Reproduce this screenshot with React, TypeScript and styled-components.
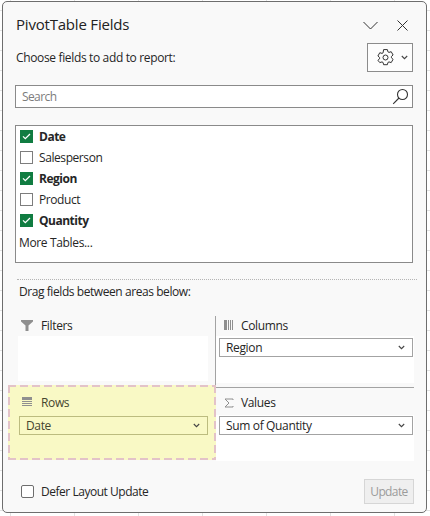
import React from 'react';
import styled, { createGlobalStyle } from 'styled-components';

const Global = createGlobalStyle`
  html, body { margin: 0; padding: 0; }
  body {
    width: 430px; height: 516px; overflow: hidden;
    font-family: "Open Sans", "Noto Sans", sans-serif;
    background-color: #fff;
    background-image:
      repeating-linear-gradient(to right, transparent 0 10px, #e2e2e2 10px 11px, transparent 11px 64px),
      repeating-linear-gradient(to bottom, transparent 0 10px, #e2e2e2 10px 11px, transparent 11px 20px);
  }
`;

const Panel = styled.div`
  box-sizing: border-box;
  margin: 1px 0 0 2px;
  width: 425px;
  height: 512px;
  border: 1px solid #6e6e6e;
  border-radius: 5px;
  background: #f9f9f9;
  padding: 12px 13px 0 12px;
  display: flex;
  flex-direction: column;
  color: #262626;
  font-size: 12px;
  letter-spacing: -0.35px;
`;

const Header = styled.div`
  display: flex;
  align-items: center;
  justify-content: space-between;
  height: 22px;
`;

const Title = styled.h1`
  margin: -2px 0 0 1px;
  font-size: 15px;
  font-weight: 400;
  letter-spacing: -0.2px;
  color: #222;
  line-height: 22px;
`;

const WindowButtons = styled.div`
  display: flex;
  align-items: center;
  gap: 19px;
  margin-right: 5px;
`;

const ChooseRow = styled.div`
  display: flex;
  align-items: center;
  justify-content: space-between;
  margin-top: 7px;
  height: 29px;
`;

const Label = styled.span`
  margin-left: 1px;
  line-height: 16px;
`;

const GearButton = styled.div`
  box-sizing: border-box;
  width: 46px;
  height: 29px;
  border: 1px solid #8c8c8c;
  background: #fdfdfd;
  display: flex;
  align-items: center;
  padding-left: 9px;
  gap: 7px;
`;

const SearchBox = styled.div`
  box-sizing: border-box;
  margin-top: 13px;
  height: 23px;
  border: 1px solid #8a8a8a;
  background: #fff;
  display: flex;
  align-items: center;
  justify-content: space-between;
  padding: 0 3px 0 6px;
  color: #7c7c7c;
  letter-spacing: -0.6px;
`;

const FieldList = styled.div`
  box-sizing: border-box;
  margin-top: 17px;
  height: 138px;
  border: 1px solid #8a8a8a;
  background: #fff;
  padding: 0 0 0 4px;
`;

const FieldRow = styled.div`
  height: 21px;
  display: flex;
  align-items: center;
  gap: 6px;
`;

const FieldName = styled.span<{ $on?: boolean }>`
  font-weight: ${p => (p.$on ? 700 : 400)};
  letter-spacing: ${p => (p.$on ? '-0.5px' : '-0.42px')};
`;

const Box = styled.span<{ $on?: boolean }>`
  box-sizing: border-box;
  width: 13px;
  height: 13px;
  flex: none;
  border: 1px solid ${p => (p.$on ? '#107c41' : '#7d7d7d')};
  background: ${p => (p.$on ? '#107c41' : '#fff')};
  display: flex;
  align-items: center;
  justify-content: center;
`;

const MoreLink = styled.div`
  height: 21px;
  line-height: 23px;
  margin-left: -1px;
`;

const Dotted = styled.div`
  margin: 16px -4px 0 2px;
  border-top: 1px dotted #b4b4b4;
`;

const DragLabel = styled.div`
  margin: 4px 0 0 4px;
  height: 16px;
  line-height: 16px;
  letter-spacing: -0.43px;
`;

const AreaGrid = styled.div`
  margin: 16px -1px 0 -7px;
  display: grid;
  grid-template-columns: 208px 1fr;
  grid-template-rows: 69px 75px;
`;

const LeftArea = styled.div`
  padding: 0 8px 0 10px;
`;

const RowsArea = styled.div`
  box-sizing: border-box;
  padding: 8px 8px 0 11px;
  background-color: #f9f9c5;
  background-image:
    repeating-linear-gradient(to right, #e3c3c8 0 8px, transparent 8px 12px),
    repeating-linear-gradient(to right, #e3c3c8 0 8px, transparent 8px 12px),
    repeating-linear-gradient(to bottom, #e3c3c8 0 8px, transparent 8px 12px),
    repeating-linear-gradient(to bottom, #e3c3c8 0 8px, transparent 8px 12px);
  background-size: 100% 2px, 100% 2px, 2px 100%, 2px 100%;
  background-position: 0 0, 0 100%, 0 0, 100% 0;
  background-repeat: no-repeat;
`;

const ColumnsArea = styled.div`
  margin-left: -1px;
  margin-bottom: -2px;
  border-left: 1px solid #a3a3a3;
`;

const ValuesArea = styled.div`
  margin-top: 2px;
  border-top: 1px solid #a3a3a3;
`;

const AreaHead = styled.div<{ $indent: number; $gap: number }>`
  box-sizing: border-box;
  height: 20px;
  display: flex;
  align-items: center;
  padding: 0 0 2px ${p => p.$indent}px;
  gap: ${p => p.$gap}px;
`;

const AreaIcon = styled.span`
  width: 12px;
  height: 12px;
  display: flex;
  align-items: center;
  justify-content: center;
  flex: none;
`;

const FiltersDrop = styled.div`
  background: #fff;
  height: 45px;
`;

const ValuesHead = styled(AreaHead)`
  height: 27px;
  padding-top: 2px;
  padding-bottom: 0;
`;

const ValuesDrop = styled.div`
  background: #fff;
  height: 45px;
  padding: 1px 1px 0 3px;
`;

const ColumnsDrop = styled.div`
  background: #fff;
  height: 45px;
  padding: 2px 1px 0 3px;
`;

const Pill = styled.div<{ $tint?: boolean }>`
  box-sizing: border-box;
  height: 19px;
  border: 1px solid ${p => (p.$tint ? '#bcbc7f' : '#a3a3a3')};
  background: ${p => (p.$tint ? '#f9f9c5' : '#fff')};
  color: ${p => (p.$tint ? '#45452f' : '#262626')};
  display: flex;
  align-items: center;
  justify-content: space-between;
  padding: 0 7px 0 6px;
`;

const RowsHead = styled(AreaHead)`
  height: 23px;
  padding-bottom: 5px;
  color: #45452f;
`;

const Footer = styled.div`
  margin-top: 19px;
  display: flex;
  align-items: center;
  justify-content: space-between;
  height: 25px;
  padding-left: 6px;
`;

const Defer = styled.div`
  display: flex;
  align-items: center;
  gap: 7px;
  letter-spacing: -0.47px;
`;

const DeferBox = styled.span`
  box-sizing: border-box;
  width: 13px;
  height: 13px;
  border: 1px solid #6e6e6e;
  border-radius: 2px;
  background: #fff;
`;

const UpdateButton = styled.div`
  box-sizing: border-box;
  width: 50px;
  height: 25px;
  margin-right: -1px;
  border: 1px solid #d6d6d6;
  background: #efefef;
  color: #9b9b9b;
  letter-spacing: -0.6px;
  display: flex;
  align-items: center;
  justify-content: center;
`;

const Chevron = () => (
  <svg width="7" height="5" viewBox="0 0 7 5" fill="none" stroke="#444" strokeWidth="1.1">
    <path d="M.8 1 3.5 3.7 6.2 1" />
  </svg>
);

const Check = () => (
  <svg width="9" height="7" viewBox="0 0 9 7" fill="none" stroke="#fff" strokeWidth="1.3">
    <path d="M1 3.4 3.3 5.6 8 1" />
  </svg>
);

const Gear = () => (
  <svg width="17" height="17" viewBox="0 0 17 17" fill="none" stroke="#333" strokeWidth="1">
    <path d="M6.6 1.2h3.8l.5 2.2 1.1.6 2.2-.7 1.9 3.3-1.7 1.5v1.3l1.7 1.5-1.9 3.3-2.2-.7-1.1.6-.5 2.2H6.6l-.5-2.2-1.1-.6-2.2.7L.9 11.9l1.7-1.5V9.1L.9 7.6l1.9-3.3 2.2.7 1.1-.6z" transform="translate(0 -.6)" />
    <circle cx="8.5" cy="8.5" r="2.5" />
  </svg>
);

const fields = [
  { name: 'Date', on: true },
  { name: 'Salesperson', on: false },
  { name: 'Region', on: true },
  { name: 'Product', on: false },
  { name: 'Quantity', on: true },
];

export default function App() {
  return (
    <>
      <Global />
      <Panel>
        <Header>
          <Title>PivotTable Fields</Title>
          <WindowButtons>
            <svg width="15" height="9" viewBox="0 0 15 9" fill="none" stroke="#333" strokeWidth="1">
              <path d="M.5 1 7.5 8 14.5 1" />
            </svg>
            <svg width="11" height="11" viewBox="0 0 11 11" fill="none" stroke="#333" strokeWidth="1">
              <path d="M.5.5 10.5 10.5M10.5.5.5 10.5" />
            </svg>
          </WindowButtons>
        </Header>
        <ChooseRow>
          <Label>Choose fields to add to report:</Label>
          <GearButton>
            <Gear />
            <Chevron />
          </GearButton>
        </ChooseRow>
        <SearchBox>
          <span>Search</span>
          <svg width="17" height="17" viewBox="0 0 17 17" fill="none" stroke="#333" strokeWidth="1.1">
            <circle cx="10.5" cy="6.5" r="5" />
            <path d="M7 10 1.2 15.8" />
          </svg>
        </SearchBox>
        <FieldList>
          {fields.map(f => (
            <FieldRow key={f.name}>
              <Box $on={f.on}>{f.on && <Check />}</Box>
              <FieldName $on={f.on}>{f.name}</FieldName>
            </FieldRow>
          ))}
          <MoreLink>More Tables...</MoreLink>
        </FieldList>
        <Dotted />
        <DragLabel>Drag fields between areas below:</DragLabel>
        <AreaGrid>
          <LeftArea>
            <AreaHead $indent={3} $gap={8}>
              <AreaIcon>
                <svg width="12" height="11" viewBox="0 0 12 11" fill="#8f8f8f">
                  <path d="M0 0h12v1.5L7.5 5.5V11h-3V5.5L0 1.5z" />
                </svg>
              </AreaIcon>
              <span>Filters</span>
            </AreaHead>
            <FiltersDrop />
          </LeftArea>
          <ColumnsArea>
            <AreaHead $indent={7} $gap={6}>
              <AreaIcon>
                <svg width="10" height="10" viewBox="0 0 10 10" fill="#8f8f8f">
                  <path d="M0 0h3v10H0zM4 0h1v10H4zM6 0h1v10H6zM8 0h1v10H8z" />
                </svg>
              </AreaIcon>
              <span>Columns</span>
            </AreaHead>
            <ColumnsDrop>
              <Pill>
                <span>Region</span>
                <Chevron />
              </Pill>
            </ColumnsDrop>
          </ColumnsArea>
          <RowsArea>
            <RowsHead $indent={2} $gap={8}>
              <AreaIcon>
                <svg width="10" height="10" viewBox="0 0 10 10" fill="#8f8f8f">
                  <path d="M0 0h10v3H0zM0 4h10v1H0zM0 6h10v1H0zM0 8h10v1H0z" />
                </svg>
              </AreaIcon>
              <span>Rows</span>
            </RowsHead>
            <Pill $tint>
              <span>Date</span>
              <Chevron />
            </Pill>
          </RowsArea>
          <ValuesArea>
            <ValuesHead $indent={7} $gap={6}>
              <AreaIcon>
                <svg width="10" height="10" viewBox="0 0 10 10" fill="none" stroke="#8f8f8f" strokeWidth="1">
                  <path d="M9 2V1H1l4 4-4 4h8V8" />
                </svg>
              </AreaIcon>
              <span>Values</span>
            </ValuesHead>
            <ValuesDrop>
              <Pill>
                <span>Sum of Quantity</span>
                <Chevron />
              </Pill>
            </ValuesDrop>
          </ValuesArea>
        </AreaGrid>
        <Footer>
          <Defer>
            <DeferBox />
            <span>Defer Layout Update</span>
          </Defer>
          <UpdateButton>Update</UpdateButton>
        </Footer>
      </Panel>
    </>
  );
}
